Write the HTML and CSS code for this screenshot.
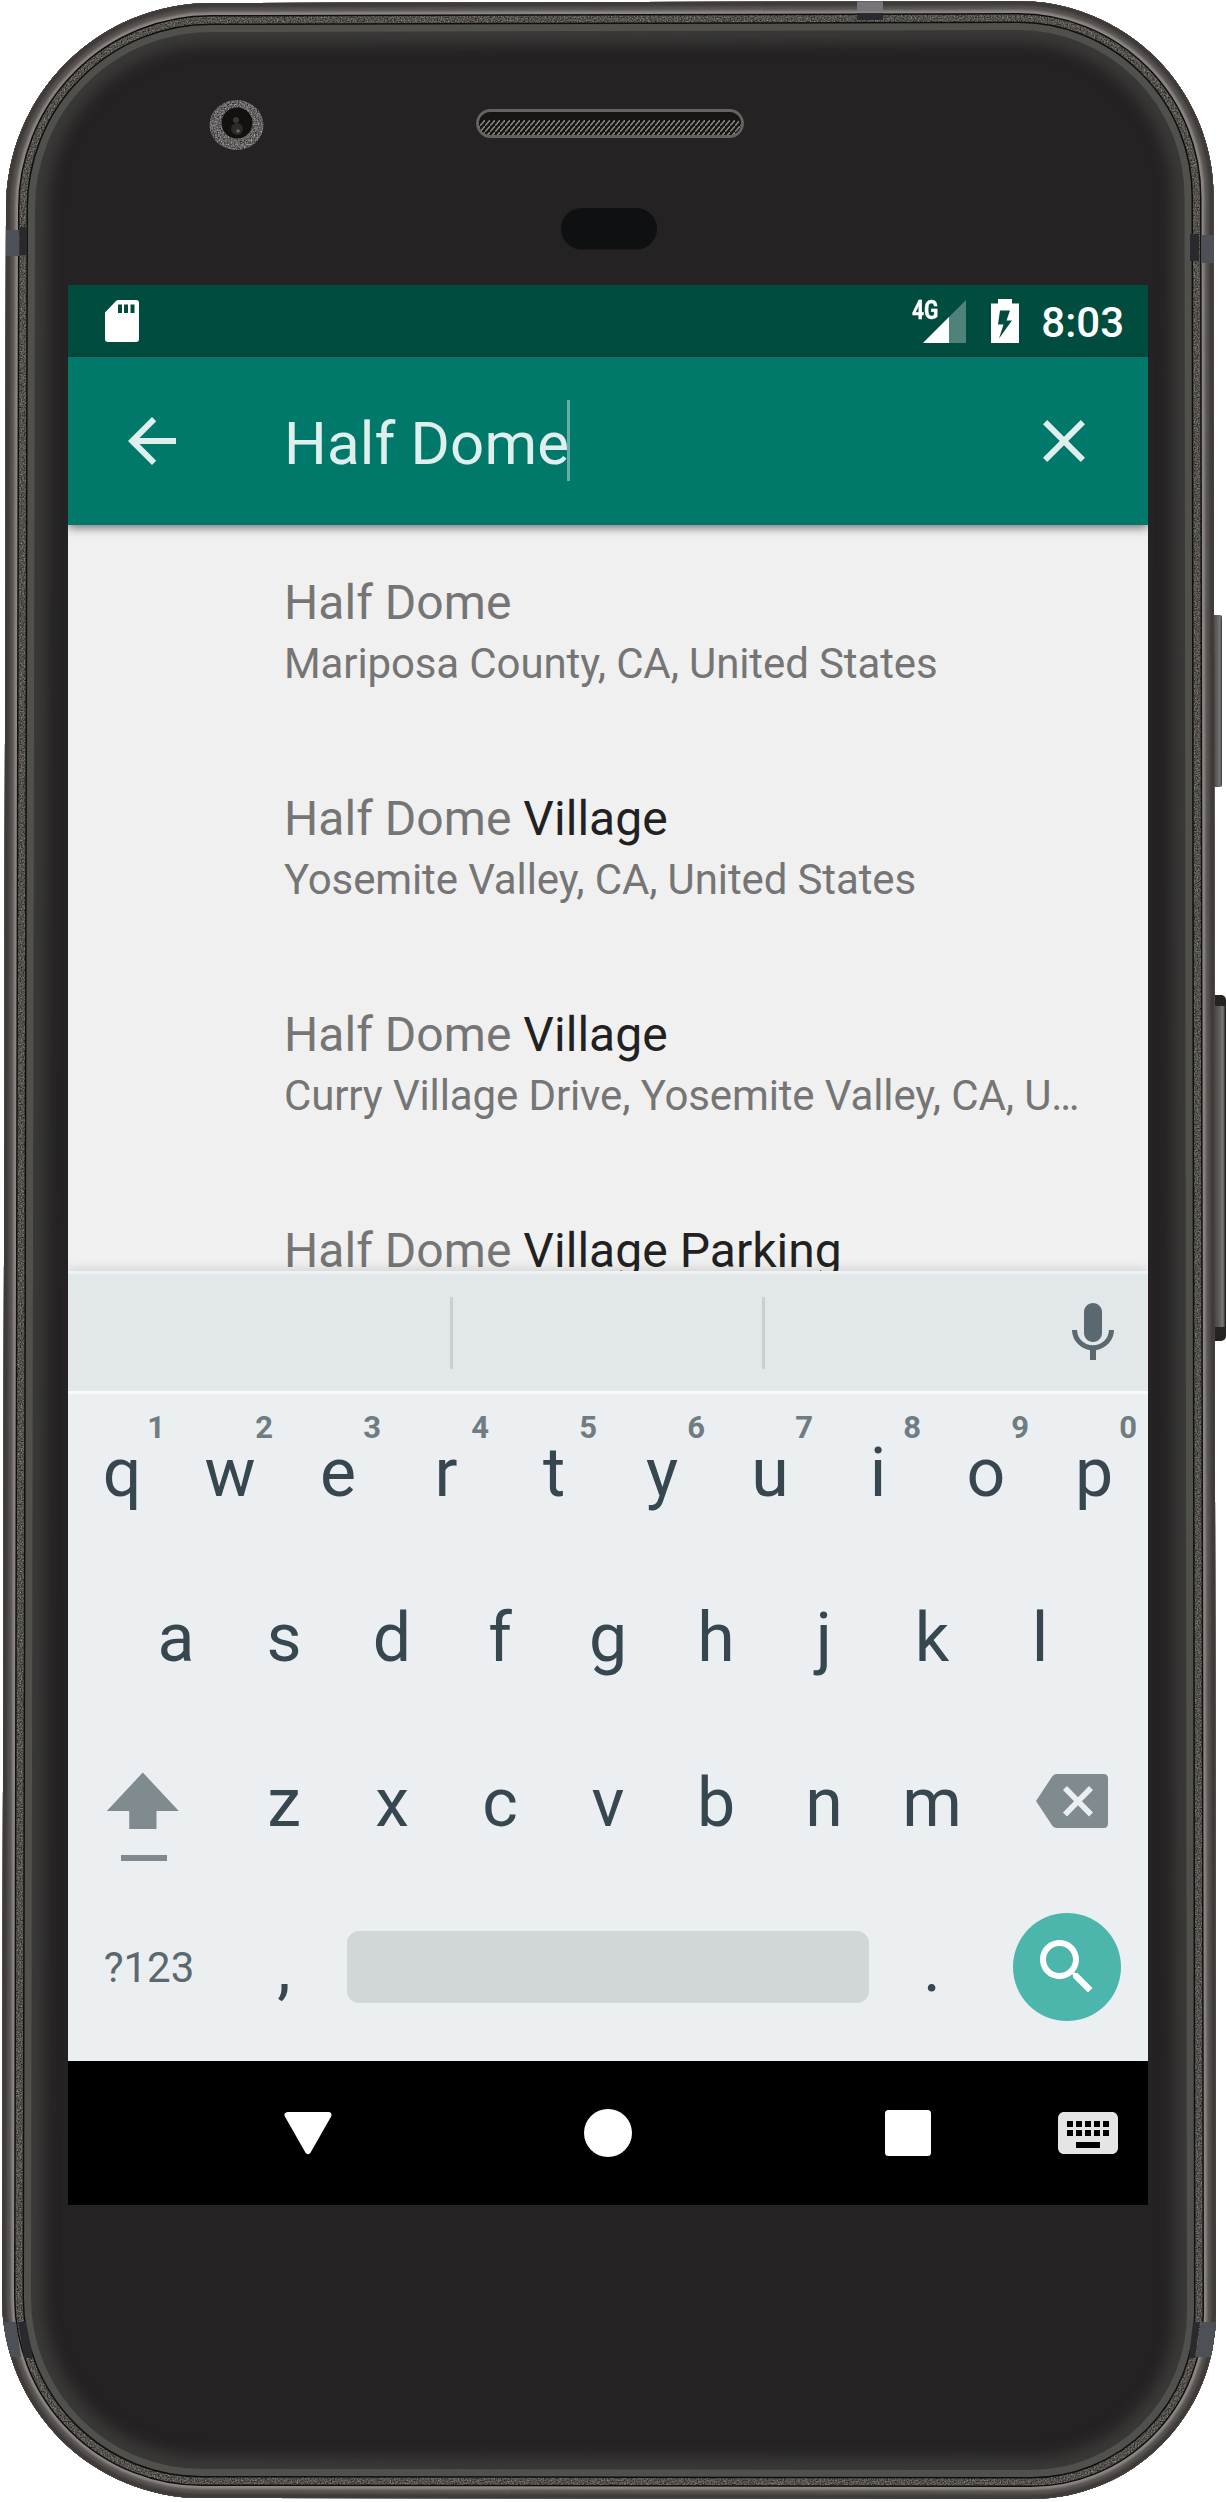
FILE: index.html
```html
<!DOCTYPE html>
<html lang="en">
<head>
<meta charset="utf-8">
<title>Place search</title>
<link rel="stylesheet" href="styles.css">
</head>
<body>
<div class="phone">
  <svg class="phone-frame" width="1226" height="2502" viewBox="0 0 1226 2502" aria-hidden="true">
    <defs>
      <path id="body" d="M211 3 L1018 1 A195.500 195.500 0 0 1 1213.500 196.500 L1216 2313 A185 186 0 0 1 1031 2499 L202 2498 A200 200 0 0 1 2 2298 L6 208 A205 205 0 0 1 211 3Z"/>
      <clipPath id="bodyClip"><use href="#body"/></clipPath>
      <filter id="soft" x="-5%" y="-5%" width="110%" height="110%" color-interpolation-filters="sRGB"><feGaussianBlur stdDeviation="7"/></filter>
      <filter id="edge" x="-5%" y="-5%" width="110%" height="110%" color-interpolation-filters="sRGB"><feGaussianBlur stdDeviation="1.200"/></filter>
      <filter id="grain" filterUnits="userSpaceOnUse" x="0" y="0" width="1226" height="2502" color-interpolation-filters="sRGB">
        <feTurbulence type="fractalNoise" baseFrequency="0.7" numOctaves="2" seed="4"/>
        <feColorMatrix type="matrix" values="0.6 0 0 0 0.03  0.6 0 0 0 0.02  0.6 0 0 0 0  0 0 0 0 1"/>
        <feComposite in2="SourceGraphic" operator="in"/>
      </filter>
      <filter id="grainLight" filterUnits="userSpaceOnUse" x="200" y="90" width="80" height="70" color-interpolation-filters="sRGB">
        <feTurbulence type="fractalNoise" baseFrequency="0.7" numOctaves="2" seed="4"/>
        <feColorMatrix type="matrix" values="0.8 0 0 0 0  0.8 0 0 0 -0.01  0.8 0 0 0 -0.01  0 0 0 0 1"/>
        <feComposite in2="SourceGraphic" operator="in"/>
      </filter>
      <linearGradient id="volume" x1="0" x2="1"><stop offset="0" stop-color="#35312e"/><stop offset=".6" stop-color="#5d5954"/><stop offset=".85" stop-color="#77767a"/><stop offset="1" stop-color="#3c3a3a"/></linearGradient>
      <pattern id="mesh" width="5" height="6" patternUnits="userSpaceOnUse"><path d="M0 6 L5 0" stroke="#85827d" stroke-width="1.500"/></pattern>
    </defs>
    <rect x="1208" y="615" width="14" height="172" rx="2" fill="url(#volume)"/>
    <rect x="1208" y="995" width="18" height="346" rx="5" fill="#252220"/>
    <rect x="1210" y="1006" width="15" height="321" fill="url(#volume)"/>
    <use href="#body" fill="#242223"/>
    <g clip-path="url(#bodyClip)" fill="none">
      <use href="#body" stroke="#3a3937" stroke-width="84" filter="url(#soft)"/>
      <use href="#body" stroke="#50504d" stroke-width="58"/>
      <use href="#body" stroke="#100f0e" stroke-width="44"/>
      <use href="#body" stroke="#54514c" stroke-width="41" filter="url(#grain)"/>
      <use href="#body" stroke="#100f0e" stroke-width="27"/>
      <use href="#body" stroke="#8d8886" stroke-width="24"/>
      <use href="#body" stroke="#57524f" stroke-width="18" filter="url(#edge)"/>
      <use href="#body" stroke="#3f3b38" stroke-width="9" filter="url(#edge)"/>
      <g fill="#4d5056">
        <rect x="0" y="230" width="19" height="26"/><rect x="1201" y="235" width="14" height="28"/><rect x="857" y="0" width="26" height="11" fill="#77757a"/>
        <path d="M0 2322 H16 L21 2357 H0Z M1201 2322 H1216 V2357 H1196Z"/>
      </g>
      <g fill="#292a2e">
        <rect x="20" y="227" width="7" height="28"/><rect x="1190" y="234" width="9" height="27"/><rect x="857" y="13" width="26" height="7"/>
        <path d="M18 2322 H26 L33 2358 H24Z M1193 2322 H1200 L1195 2358 H1189Z"/>
      </g>
    </g>
    <ellipse cx="236.500" cy="125" rx="27" ry="25" fill="#666" filter="url(#grainLight)"/>
    <circle cx="237" cy="123" r="15.500" fill="#12110f"/>
    <circle cx="237" cy="129" r="6" fill="#2c2b27"/><circle cx="236" cy="120" r="3" fill="#393732"/><circle cx="238" cy="131" r="1.800" fill="#6a655d"/>
    <rect x="477" y="110" width="266" height="26" rx="13" fill="#141312"/>
    <rect x="479" y="118" width="262" height="17" rx="8.500" fill="url(#mesh)"/>
    <rect x="480" y="113" width="260" height="7" rx="3.500" fill="#171615"/>
    <rect x="477.500" y="110.500" width="265" height="26" rx="13" fill="none" stroke="#65625f" stroke-width="2.800"/>
    <rect x="561" y="208" width="96" height="41.500" rx="20.700" fill="#0f1011"/>
  </svg>

  <main class="screen">
    <header class="status-bar">
      <svg width="34" height="42" viewBox="0 0 34 42"><path fill="#fff" fill-rule="evenodd" d="M13 0H31Q34 0 34 3V39Q34 42 31 42H3Q0 42 0 39V12.500L11 1Q12 0 13 0ZM13 4.500V13H17V4.500ZM19 4.500V13H23V4.500ZM25.500 4.500V13H29.500V4.500Z"/></svg>
      <div class="status-right">
        <div class="signal">
          <span class="network">4G</span>
          <svg width="43" height="43" viewBox="0 0 43 43"><path d="M0 43 43 0V43Z" fill="#4f8278"/><path d="M0 43 26 17V43Z" fill="#fff"/></svg>
        </div>
        <svg class="battery" width="28" height="44" viewBox="0 0 28 44"><path d="M7 0H21V4.500H28V44H0V4.500H7Z" fill="#fff"/><path d="M9 11.500H19L15.500 21.500H21L8 39.500L12.500 25.500H7Z" fill="#004d40"/></svg>
        <span class="clock">8:03</span>
      </div>
    </header>

    <div class="search-bar">
      <svg width="72" height="72" viewBox="0 0 24 24"><path d="M20 11H7.830l5.590-5.590L12 4l-8 8 8 8 1.410-1.410L7.830 13H20v-2z"/></svg>
      <div class="query"><span>Half Dome</span><i class="caret"></i></div>
      <svg width="72" height="72" viewBox="0 0 24 24"><path d="M19 6.410 17.590 5 12 10.590 6.410 5 5 6.410 10.590 12 5 17.590 6.410 19 12 13.410 17.590 19 19 17.590 13.410 12z"/></svg>
    </div>

    <section class="results">
      <div class="result"><div class="name">Half Dome</div><div class="place">Mariposa County, CA, United States</div></div>
      <div class="result"><div class="name">Half Dome <b>Village</b></div><div class="place">Yosemite Valley, CA, United States</div></div>
      <div class="result"><div class="name">Half Dome <b>Village</b></div><div class="place">Curry Village Drive, Yosemite Valley, CA, U…</div></div>
      <div class="result"><div class="name">Half Dome <b>Village Parking</b></div></div>
    </section>

    <section class="keyboard">
      <div class="suggestions">
        <span class="slot slot-first"></span><span class="slot"></span>
        <svg width="72" height="72" viewBox="0 0 24 24" fill="#5a6970"><path d="M12 15c1.660 0 3-1.340 3-3V5c0-1.660-1.340-3-3-3S9 3.340 9 5v7c0 1.660 1.340 3 3 3z"/><path d="M17.300 11c0 3-2.540 5.100-5.300 5.100S6.700 14 6.700 11H5c0 3.410 2.720 6.230 6 6.720V21h2v-3.280c3.280-.48 6-3.300 6-6.720h-1.700z"/></svg>
      </div>
      <div class="keys">
        <div class="row">
          <span class="key">q<sup>1</sup></span><span class="key">w<sup>2</sup></span><span class="key">e<sup>3</sup></span><span class="key">r<sup>4</sup></span><span class="key">t<sup>5</sup></span><span class="key">y<sup>6</sup></span><span class="key">u<sup>7</sup></span><span class="key">i<sup>8</sup></span><span class="key">o<sup>9</sup></span><span class="key">p<sup>0</sup></span>
        </div>
        <div class="row">
          <span class="key">a</span><span class="key">s</span><span class="key">d</span><span class="key">f</span><span class="key">g</span><span class="key">h</span><span class="key">j</span><span class="key">k</span><span class="key">l</span>
        </div>
        <div class="row">
          <svg width="162" height="158" viewBox="68 1724 162 158" fill="#808b8f"><path d="M142.800 1772.500 178.800 1811H156.500V1829H129.200V1811H106.800Z"/><rect x="121" y="1855" width="46" height="6"/></svg>
          <span class="key">z</span><span class="key">x</span><span class="key">c</span><span class="key">v</span><span class="key">b</span><span class="key">n</span><span class="key">m</span>
          <svg width="162" height="158" viewBox="986 1724 162 158"><path d="M1036 1801 1052.500 1776Q1054 1774 1057 1774H1103.500Q1108 1774 1108 1778.500V1823.500Q1108 1828 1103.500 1828H1057Q1054 1828 1052.500 1826Z" fill="#808b8f"/><path d="M1065 1788 1091 1814.500M1091 1788 1065 1814.500" stroke="#ebeff2" stroke-width="5.600"/></svg>
        </div>
        <div class="row">
          <span class="key wide symbols">?123</span><span class="key">,</span><span class="space"></span><span class="key">.</span>
          <span class="key wide"><span class="go"><svg width="72" height="72" viewBox="0 0 24 24" fill="#fff"><path d="M15.500 14h-.79l-.28-.27C15.410 12.590 16 11.110 16 9.500 16 5.910 13.090 3 9.500 3S3 5.910 3 9.500 5.910 16 9.500 16c1.610 0 3.090-.59 4.230-1.570l.27.28v.79l5 4.990L20.490 19l-4.990-5zm-6 0C7.010 14 5 11.990 5 9.500S7.010 5 9.500 5 14 7.010 14 9.500 11.990 14 9.500 14z"/></svg></span></span>
        </div>
      </div>
    </section>

    <nav class="nav-bar">
      <svg width="48" height="48" viewBox="0 0 48 48"><path fill="#fff" stroke="#fff" stroke-width="6" stroke-linejoin="round" d="M3.500 6H44.500L24 42Z"/></svg>
      <svg width="48" height="48" viewBox="0 0 48 48"><circle cx="24" cy="24" r="24" fill="#fff"/></svg>
      <svg width="46" height="46" viewBox="0 0 46 46"><rect width="46" height="46" rx="3.500" fill="#fff"/></svg>
      <svg width="72" height="72" viewBox="0 0 24 24" fill="#e5e5e5"><path d="M20 5H4c-1.100 0-1.990.9-1.990 2L2 17c0 1.100.9 2 2 2h16c1.100 0 2-.9 2-2V7c0-1.100-.9-2-2-2zm-9 3h2v2h-2V8zm0 3h2v2h-2v-2zM8 8h2v2H8V8zm0 3h2v2H8v-2zm-1 2H5v-2h2v2zm0-3H5V8h2v2zm9 7H8v-2h8v2zm0-4h-2v-2h2v2zm0-3h-2V8h2v2zm3 3h-2v-2h2v2zm0-3h-2V8h2v2z"/></svg>
    </nav>
  </main>
</div>
</body>
</html>
```
FILE: styles.css
```css
* { box-sizing: border-box; }

body {
  margin: 0;
  background: #fff;
  font-family: Roboto, sans-serif;
}

svg { display: block; flex: none; }

.phone {
  position: relative;
  width: 1226px;
  height: 2502px;
  padding: 285px 78px 297px 68px;
}

.phone-frame { position: absolute; inset: 0; }

.screen {
  position: relative;
  width: 1080px;
  height: 1920px;
  display: flex;
  flex-direction: column;
  overflow: hidden;
  background: #f0f0f0;
}

/* Status bar */
.status-bar {
  height: 72px;
  padding: 0 24px 0 37px;
  display: flex;
  justify-content: space-between;
  align-items: center;
  background: #004d40;
}

.status-right { display: flex; align-items: center; }
.signal { position: relative; width: 53px; padding-left: 10px; }
.network {
  position: absolute;
  left: -1px;
  top: 1px;
  font-size: 25px;
  line-height: 19px;
  font-weight: 700;
  color: #fff;
  -webkit-text-stroke: .4px #fff;
  transform: scaleX(.84);
  transform-origin: left;
}
.battery { margin: 0 22px 0 25px; }
.clock { font-size: 42px; line-height: 72px; font-weight: 500; color: #fff; padding-top: 3px; }

/* Search bar */
.search-bar {
  position: relative;
  z-index: 1;
  height: 168px;
  padding: 0 48px;
  display: flex;
  align-items: center;
  background: #00796b;
  box-shadow: 0 3px 9px rgba(0, 0, 0, .5);
  fill: #dfefed;
}

.query {
  flex: 1;
  margin-left: 96px;
  display: flex;
  align-items: center;
  color: #dfefed;
  font-size: 60px;
  line-height: 72px;
  letter-spacing: .15px;
}
.query span { padding-top: 5px; }
.caret { width: 3px; height: 81px; margin: -2px 0 0 -2px; background: #66afa6; }

/* Results */
.results { height: 746px; overflow: hidden; }
.result { height: 216px; padding: 50px 60px 0 216px; color: #757575; white-space: nowrap; }
.name { font-size: 48px; line-height: 56px; letter-spacing: .04px; }
.name b { font-weight: 400; color: #212121; }
.place { margin-top: 5px; font-size: 42px; line-height: 56px; letter-spacing: -.12px; }

/* Keyboard */
.keyboard {
  position: relative;
  height: 790px;
  background: #ebeff2;
  box-shadow: 0 -2px 10px rgba(0, 0, 0, .13);
}

.suggestions {
  height: 123px;
  padding-right: 19px;
  display: flex;
  align-items: center;
  background: #e2e7ea;
  border-top: 3px solid #eff2f3;
  border-bottom: 3px solid #f7f9fa;
}
.suggestions svg { margin-left: auto; }
.slot { width: 312px; height: 72px; border-right: 3px solid #c9ced1; }
.slot-first { width: 385px; }

.keys { display: flex; flex-direction: column; gap: 7px; }
.row { height: 158px; display: flex; justify-content: center; }
.key {
  position: relative;
  width: 108px;
  display: flex;
  justify-content: center;
  align-items: center;
  font-size: 68px;
  line-height: 80px;
  color: #37474f;
}
.key sup {
  position: absolute;
  top: 16px;
  right: 11px;
  font-size: 31px;
  line-height: 36px;
  font-weight: 700;
  color: #6f7c82;
}
.wide { width: 162px; padding-bottom: 2px; }
.symbols { padding-bottom: 0; font-size: 42px; color: #5b696f; }
.space { width: 522px; height: 72px; margin: 42px 9px 0; border-radius: 12px; background: #d1d6d9; }
.go {
  width: 108px;
  height: 108px;
  display: flex;
  justify-content: center;
  align-items: center;
  border-radius: 50%;
  background: #4db6ac;
}

/* Navigation bar */
.nav-bar {
  height: 144px;
  padding: 0 24px 0 216px;
  display: flex;
  justify-content: flex-start;
  align-items: center;
  background: #000;
}
.nav-bar svg:nth-child(2) { margin-left: 252px; }
.nav-bar svg:nth-child(3) { margin-left: 253px; }
.nav-bar svg:nth-child(4) { margin-left: auto; }
```
